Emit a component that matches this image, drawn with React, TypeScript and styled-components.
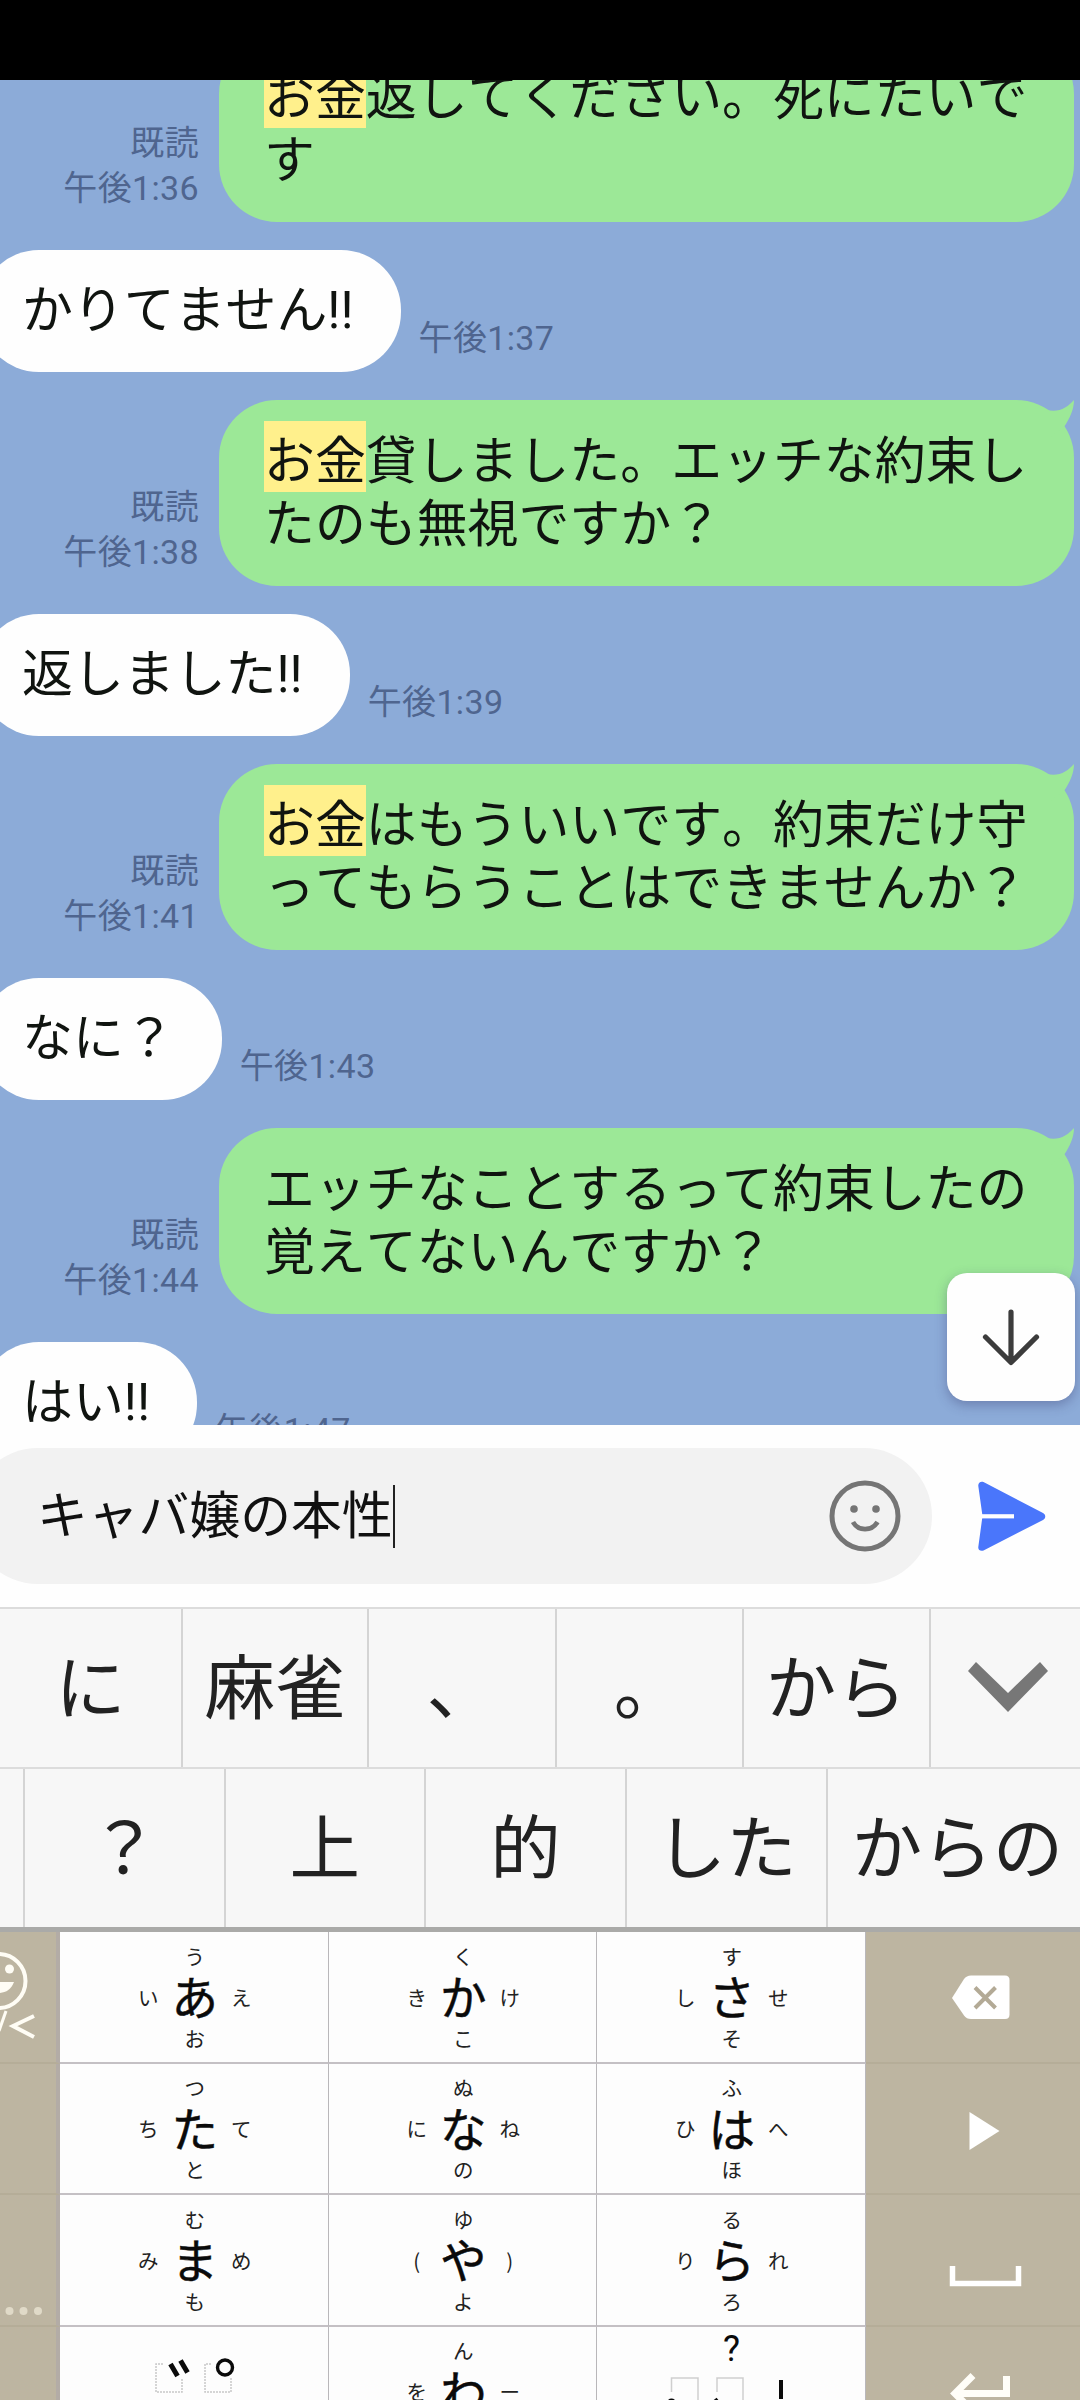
import React from 'react';
import styled, { createGlobalStyle } from 'styled-components';

const GlobalStyle = createGlobalStyle`
  * { box-sizing: border-box; }
  body {
    margin: 0;
    background: #000;
    font-family: Roboto, "Noto Sans CJK JP", sans-serif;
    font-kerning: none;
  }
`;

const Screen = styled.div`
  width: 1080px;
  height: 2400px;
  overflow: hidden;
  display: flex;
  flex-direction: column;
  background: #fdfdfd;
`;

const StatusBar = styled.div`
  height: 80px;
  flex: none;
  background: #000;
`;

const Chat = styled.main`
  position: relative;
  height: 1345px;
  flex: none;
  overflow: hidden;
  background: #8cabd8;
`;

const Thread = styled.div`
  display: flex;
  flex-direction: column;
  gap: 28px;
  margin-top: -44px;
`;

const SentRow = styled.div`
  display: flex;
  justify-content: flex-end;
  align-items: flex-end;
  gap: 20px;
  padding-right: 6px;
`;

const ReceivedRow = styled.div`
  display: flex;
  align-items: flex-end;
  gap: 18px;
  margin-left: -21px;
`;

const SentBubble = styled.div`
  position: relative;
  width: 855px;
  height: 186px;
  padding: 30px 0 0 45px;
  border-radius: 58px;
  background: #9ce897;
`;

const ReceivedBubble = styled.div`
  height: 122px;
  padding: 29px 47px 0 43px;
  border-radius: 60px;
  background: #fefefe;
`;

const Line = styled.div`
  height: 63px;
  line-height: 63px;
  font-size: 50.9px;
  color: #101410;
  white-space: nowrap;
`;

const Highlight = styled.mark`
  padding: 11px 0 1px;
  background: #fff08c;
  color: inherit;
`;

const Tail = styled.svg`
  position: absolute;
  top: 0;
  right: -1px;
  width: 40px;
  height: 50px;
`;

const Meta = styled.div<{ $sent?: boolean }>`
  font-size: 34px;
  letter-spacing: 0.35px;
  line-height: 44.5px;
  color: #4f658f;
  text-align: ${(p) => (p.$sent ? 'right' : 'left')};
  padding-bottom: 12px;
`;

const ScrollButton = styled.button`
  position: absolute;
  right: 5px;
  bottom: 24px;
  width: 128px;
  height: 128px;
  padding: 0;
  border: 0;
  border-radius: 20px;
  background: #fefefe;
  box-shadow: 0 4px 12px rgba(50, 50, 100, 0.35);
`;

const Composer = styled.div`
  display: flex;
  align-items: center;
  height: 182px;
  flex: none;
  background: #fefefe;
`;

const Field = styled.div`
  display: flex;
  align-items: center;
  justify-content: space-between;
  width: 962px;
  height: 136px;
  margin-left: -30px;
  padding: 0 31px 0 67px;
  border-radius: 68px;
  background: #f2f2f2;
`;

const Draft = styled.div`
  display: flex;
  align-items: center;
  font-size: 50.8px;
  line-height: 63px;
  color: #111;
`;

const Caret = styled.i`
  width: 2px;
  height: 63px;
  background: #222;
`;

const SendButton = styled.button`
  width: 70px;
  height: 70px;
  margin-left: 45px;
  padding: 0;
  border: 0;
  background: none;
`;

const Suggestions = styled.div<{ $cols: string; $h: number }>`
  display: grid;
  grid-template-columns: ${(p) => p.$cols};
  height: ${(p) => p.$h}px;
  flex: none;
  border-top: 2px solid #dcdcdc;
  background: #f7f7f7;
  overflow: hidden;
`;

const Suggestion = styled.div`
  display: flex;
  align-items: center;
  justify-content: center;
  border-right: 2px solid #d4d4d4;
  font-family: "Noto Sans CJK JP", sans-serif;
  font-size: 70.5px;
  line-height: 1;
  color: #222;
  white-space: nowrap;
  padding-bottom: 9px;
`;

const Chevron = styled.svg`
  display: block;
  margin-top: 6px;
`;

const Keyboard = styled.div`
  display: grid;
  grid-template-columns: 60px repeat(3, 268.5px) 238px;
  grid-template-rows: repeat(4, 131.5px);
  flex: none;
  border-top: 5px solid #aaaaa8;
`;

const Key = styled.div`
  display: grid;
  grid-template-columns: 40px 53px 40px;
  grid-template-rows: 34px 48px 34px;
  place-content: center;
  place-items: center;
  padding-left: 2px;
  border-right: 1px solid #b9b7ba;
  border-bottom: 2px solid #c4c0c4;
  background: #fdfdfd;
  font-family: "Noto Sans CJK JP", sans-serif;
  line-height: 1;
  color: #0a0a0a;
`;

const Main = styled.span`
  grid-area: 2 / 2;
  margin-top: -3px;
  font-size: 46.5px;
  -webkit-text-stroke: 0.5px #0a0a0a;
`;

const Flick = styled.span<{ $area: string }>`
  grid-area: ${(p) => p.$area};
  font-size: 20.5px;
  color: #222;
`;

const DrawnKey = styled.div`
  border-right: 1px solid #b9b7ba;
  background: #fdfdfd;
`;

const SideKey = styled.div<{ $left?: boolean }>`
  border-bottom: 2px solid #b5ad98;
  border-right: ${(p) => (p.$left ? '4px solid #b3aca6' : '0')};
  background: #bdb5a1;
  overflow: hidden;
`;

const Glyph = styled.svg`
  display: block;
`;

type Sent = { mark?: string; first: string; second: string; time: string };

const SentMessage = ({ mark, first, second, time }: Sent) => (
  <SentRow>
    <Meta $sent>
      既読
      <br />
      {time}
    </Meta>
    <SentBubble>
      <Tail viewBox="0 0 40 50">
        <path d="M12 10C24 13 33 7 39 0C39 9 35 18 29 27L12 40Z" fill="#9ce897" />
      </Tail>
      <Line>
        {mark && <Highlight>{mark}</Highlight>}
        {first}
      </Line>
      <Line>{second}</Line>
    </SentBubble>
  </SentRow>
);

const ReceivedMessage = ({ text, time }: { text: string; time: string }) => (
  <ReceivedRow>
    <ReceivedBubble>
      <Line>{text}</Line>
    </ReceivedBubble>
    <Meta>{time}</Meta>
  </ReceivedRow>
);

const areas = ['2 / 1', '1 / 2', '2 / 3', '3 / 2'];

const KanaKey = ({ kana }: { kana: string }) => (
  <Key>
    <Main>{kana[0]}</Main>
    {areas.map((area, i) => (
      <Flick key={area} $area={area}>
        {kana[i + 1]}
      </Flick>
    ))}
  </Key>
);

export default function App() {
  return (
    <Screen>
      <GlobalStyle />
      <StatusBar />
      <Chat>
        <Thread>
          <SentMessage mark="お金" first="返してください。死にたいで" second="す" time="午後1:36" />
          <ReceivedMessage text="かりてません!!" time="午後1:37" />
          <SentMessage mark="お金" first="貸しました。エッチな約束し" second="たのも無視ですか？" time="午後1:38" />
          <ReceivedMessage text="返しました!!" time="午後1:39" />
          <SentMessage mark="お金" first="はもういいです。約束だけ守" second="ってもらうことはできませんか？" time="午後1:41" />
          <ReceivedMessage text="なに？" time="午後1:43" />
          <SentMessage first="エッチなことするって約束したの" second="覚えてないんですか？" time="午後1:44" />
          <ReceivedMessage text="はい!!" time="午後1:47" />
        </Thread>
        <ScrollButton aria-label="下へ">
          <Glyph width="128" height="128" viewBox="0 0 128 128" fill="none" stroke="#3c3c3c" strokeWidth="5.2" strokeLinecap="round" strokeLinejoin="round">
            <path d="M64 39V89M38.5 64L64 89.5L89.5 64" />
          </Glyph>
        </ScrollButton>
      </Chat>

      <Composer>
        <Field>
          <Draft>
            キャバ嬢の本性
            <Caret />
          </Draft>
          <Glyph width="72" height="72" viewBox="0 0 72 72" fill="none" stroke="#757575" strokeWidth="5">
            <circle cx="36" cy="36" r="33" />
            <circle cx="25" cy="29" r="3.8" fill="#757575" stroke="none" />
            <circle cx="47" cy="29" r="3.8" fill="#757575" stroke="none" />
            <path d="M24 42C29 51.5 43 51.5 48.5 42" strokeWidth="4.6" />
          </Glyph>
        </Field>
        <SendButton aria-label="送信">
          <Glyph width="70" height="70" viewBox="0 0 70 70">
            <path d="M6.5 1L66 32C69 33.5 69 37.5 66 39L6.5 69.5C3.5 70.5 1 69 1.3 66L5.5 35L1.3 5C1 1.8 3.5 0 6.5 1Z" fill="#4a76fb" />
            <path d="M5 35.3H37" stroke="#fefefe" strokeWidth="4.2" />
          </Glyph>
        </SendButton>
      </Composer>

      <Suggestions $cols="183px 186px 187.5px 187px 187.5px 155px" $h={160}>
        {['に', '麻雀', '、', '。', 'から'].map((t) => (
          <Suggestion key={t}>{t}</Suggestion>
        ))}
        <Suggestion>
          <Chevron width="80" height="50" viewBox="0 0 80 50">
            <path d="M0 9L8 0L40 31L72 0L80 9L40 50Z" fill="#777" />
          </Chevron>
        </Suggestion>
      </Suggestions>
      <Suggestions $cols="24.5px 201px 200.5px 201px 200.5px 262px" $h={160}>
        {['', '？', '上', '的', 'した', 'からの'].map((t) => (
          <Suggestion key={t}>{t}</Suggestion>
        ))}
      </Suggestions>

      <Keyboard>
        <SideKey $left>
          <Glyph width="60" height="131" viewBox="0 0 60 131" fill="none" stroke="#fffdf5" strokeWidth="4">
            <circle cx="-1.5" cy="49" r="27" />
            <circle cx="9.5" cy="37" r="4.5" fill="#fffdf5" stroke="none" />
            <path d="M-20 50H14C11 58 5 61 -2 61Z" fill="#fffdf5" stroke="none" />
            <path d="M6 79L-1 99" strokeWidth="3" />
            <path d="M34 84L13 94L34 105" />
          </Glyph>
        </SideKey>
        <KanaKey kana="あいうえお" />
        <KanaKey kana="かきくけこ" />
        <KanaKey kana="さしすせそ" />
        <SideKey>
          <Glyph width="215" height="131" viewBox="0 0 215 131">
            <path d="M86 66L98 47Q100.5 43.5 105 43.5H139Q143.5 43.5 143.5 48V82.5Q143.5 87 139 87H105Q100.5 87 98 83.5Z" fill="#fff" />
            <path d="M109 55.5L129.5 76M129.5 55.5L109 76" stroke="#b3aa96" strokeWidth="4" />
          </Glyph>
        </SideKey>

        <SideKey $left />
        <KanaKey kana="たちつてと" />
        <KanaKey kana="なにぬねの" />
        <KanaKey kana="はひふへほ" />
        <SideKey>
          <Glyph width="215" height="131" viewBox="0 0 215 131">
            <path d="M103.5 48L133.5 67L103.5 86Z" fill="#fff" />
          </Glyph>
        </SideKey>

        <SideKey $left>
          <Glyph width="60" height="131" viewBox="0 0 60 131" fill="#e0dac8">
            <circle cx="9.5" cy="116" r="4" />
            <circle cx="23.5" cy="116" r="4" />
            <circle cx="38" cy="116" r="4" />
          </Glyph>
        </SideKey>
        <KanaKey kana="まみむめも" />
        <KanaKey kana="や(ゆ)よ" />
        <KanaKey kana="らりるれろ" />
        <SideKey>
          <Glyph width="215" height="131" viewBox="0 0 215 131">
            <path d="M86.5 71V88.5H152.5V71" fill="none" stroke="#fff" strokeWidth="5.5" />
          </Glyph>
        </SideKey>

        <SideKey $left />
        <DrawnKey>
          <Glyph width="267" height="74" viewBox="0 0 267 74" fill="none">
            <path d="M103 37H96V65H122V52M151 37H145V65H171V50" stroke="#c8c8c8" strokeWidth="1.5" strokeDasharray="2 1" />
            <path d="M110.5 37L117.5 49M120.5 33.5L127.5 45.5" stroke="#0a0a0a" strokeWidth="5" />
            <circle cx="165" cy="40.5" r="7.5" stroke="#0a0a0a" strokeWidth="3.4" />
          </Glyph>
        </DrawnKey>
        <KanaKey kana="わをんー　" />
        <DrawnKey>
          <Glyph width="267" height="74" viewBox="0 0 267 74" fill="none">
            <text x="134.5" y="34" textAnchor="middle" fill="#0a0a0a" fontFamily="Roboto, sans-serif" fontSize="36">?</text>
            <path d="M74.5 65V51H101V74M120 65V51H146V74" stroke="#cfcfcf" strokeWidth="1.5" />
            <circle cx="74.5" cy="76" r="4.5" fill="#0a0a0a" />
            <path d="M118 72L122 77" stroke="#0a0a0a" strokeWidth="4" />
            <path d="M184 53V72" stroke="#0a0a0a" strokeWidth="4" />
          </Glyph>
        </DrawnKey>
        <SideKey>
          <Glyph width="215" height="74" viewBox="0 0 215 74" fill="none" stroke="#fffef8" strokeWidth="7">
            <path d="M107 48.5L89 66.5L107 84.5M89 66.5H140.5V49" />
          </Glyph>
        </SideKey>
      </Keyboard>
    </Screen>
  );
}
